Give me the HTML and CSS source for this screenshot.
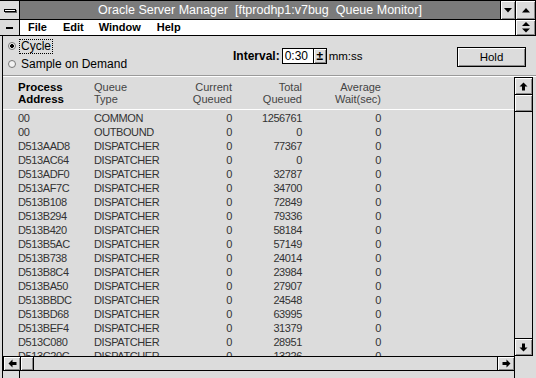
FILE: index.html
```html
<!DOCTYPE html>
<html lang="en">
<head>
    <meta charset="UTF-8">
    <title>Oracle Server Manager - Queue Monitor</title>
    <link rel="stylesheet" href="styles.css">
</head>
<body>

    <div class="window">
        <div class="titlebar">
            <div class="sysbox"><span class="sysbar"></span></div>
            <div class="title">Oracle Server Manager  [ftprodhp1:v7bug  Queue Monitor]</div>
            <div class="capbtn min">
                <svg width="8" height="5" viewBox="0 0 8 5"><polygon points="0,0 8,0 4,4.5" fill="#000"/></svg>
            </div>
            <div class="capbtn max">
                <svg width="8" height="5" viewBox="0 0 8 5"><polygon points="4,0 8,4.5 0,4.5" fill="#000"/></svg>
            </div>
        </div>

        <div class="menubar">
            <div class="sysbox"><span class="sysdash"></span></div>
            <ul class="menus">
                <li>File</li>
                <li>Edit</li>
                <li>Window</li>
                <li>Help</li>
            </ul>
            <div class="capbtn max">
                <svg width="8" height="11" viewBox="0 0 8 11"><polygon points="4,0 8,4 0,4" fill="#000"/><polygon points="0,6.5 8,6.5 4,10.5" fill="#000"/></svg>
            </div>
        </div>

        <div class="client">
            <div class="controls">
                <div class="radios">
                    <div class="radio checked"><span class="dot"></span><span class="text focus">Cycle</span></div>
                    <div class="radio"><span class="dot"></span><span class="text">Sample on Demand</span></div>
                </div>
                <div class="interval">
                    <span class="label">Interval:</span>
                    <span class="field">0:30</span>
                    <span class="spin">±</span>
                    <span class="unit">mm:ss</span>
                </div>
                <button class="hold">Hold</button>
            </div>

            <div class="list">
                <div class="table">
                    <div class="head">
                        <span class="key">Process<br>Address</span>
                        <span>Queue<br>Type</span>
                        <span class="num">Current<br>Queued</span>
                        <span class="num">Total<br>Queued</span>
                        <span class="num">Average<br>Wait(sec)</span>
                    </div>
                    <div class="rows" id="rows"></div>
                </div>
                <div class="vscroll">
                    <div class="sbtn">
                        <svg width="9" height="9" viewBox="0 0 9 9"><polygon points="4.5,0.5 8.5,4.5 6,4.5 6,8.5 3,8.5 3,4.5 0.5,4.5" fill="#000"/></svg>
                    </div>
                    <div class="thumb"></div>
                    <div class="track"></div>
                    <div class="sbtn down">
                        <svg width="9" height="9" viewBox="0 0 9 9"><polygon points="4.5,8.5 8.5,4.5 6,4.5 6,0.5 3,0.5 3,4.5 0.5,4.5" fill="#000"/></svg>
                    </div>
                </div>
            </div>

            <div class="hscroll">
                <div class="sbtn">
                    <svg width="9" height="9" viewBox="0 0 9 9"><polygon points="0.5,4.5 4.5,0.5 4.5,3 8.5,3 8.5,6 4.5,6 4.5,8.5" fill="#000"/></svg>
                </div>
                <div class="thumb"></div>
                <div class="track"></div>
                <div class="sbtn right">
                    <svg width="9" height="9" viewBox="0 0 9 9"><polygon points="8.5,4.5 4.5,0.5 4.5,3 0.5,3 0.5,6 4.5,6 4.5,8.5" fill="#000"/></svg>
                </div>
            </div>

            <div class="foot"><div class="pane"></div></div>
        </div>
    </div>

    <script>
        const queues = [
            ["00", "COMMON", 0, 1256761, 0],
            ["00", "OUTBOUND", 0, 0, 0],
            ["D513AAD8", "DISPATCHER", 0, 77367, 0],
            ["D513AC64", "DISPATCHER", 0, 0, 0],
            ["D513ADF0", "DISPATCHER", 0, 32787, 0],
            ["D513AF7C", "DISPATCHER", 0, 34700, 0],
            ["D513B108", "DISPATCHER", 0, 72849, 0],
            ["D513B294", "DISPATCHER", 0, 79336, 0],
            ["D513B420", "DISPATCHER", 0, 58184, 0],
            ["D513B5AC", "DISPATCHER", 0, 57149, 0],
            ["D513B738", "DISPATCHER", 0, 24014, 0],
            ["D513B8C4", "DISPATCHER", 0, 23984, 0],
            ["D513BA50", "DISPATCHER", 0, 27907, 0],
            ["D513BBDC", "DISPATCHER", 0, 24548, 0],
            ["D513BD68", "DISPATCHER", 0, 63995, 0],
            ["D513BEF4", "DISPATCHER", 0, 31379, 0],
            ["D513C080", "DISPATCHER", 0, 28951, 0],
            ["D513C20C", "DISPATCHER", 0, 13226, 0]
        ];

        const rowsEl = document.getElementById("rows");
        queues.forEach(q => {
            const row = document.createElement("div");
            row.classList.add("row");
            row.innerHTML = `
                <span>${q[0]}</span>
                <span>${q[1]}</span>
                <span class="num">${q[2]}</span>
                <span class="num">${q[3]}</span>
                <span class="num">${q[4]}</span>
            `;
            rowsEl.appendChild(row);
        });
    </script>

</body>
</html>
```

FILE: styles.css
```css
* {
    box-sizing: border-box;
}

body {
    margin: 0;
    width: 536px;
    height: 378px;
    overflow: hidden;
    background: #dcdcdc;
    font-family: "Liberation Sans", Arial, sans-serif;
    color: #000;
}

.window {
    display: flex;
    flex-direction: column;
    height: 378px;
}

/* caption + menu */
.titlebar {
    display: flex;
    height: 20px;
    border-top: 1px solid #000;
    border-bottom: 1px solid #000;
}

.sysbox {
    width: 20px;
    border-right: 1px solid #000;
    background: #dcdcdc;
    display: flex;
    align-items: center;
    justify-content: center;
}

.sysbar {
    width: 12px;
    height: 3px;
    background: #fff;
    border: 1px solid #000;
    box-shadow: 1px 1px 0 #666;
}

.sysdash {
    width: 7px;
    height: 2px;
    background: #000;
}

.title {
    flex: 1;
    background: #7b7b7b;
    color: #fff;
    font-size: 12.5px;
    line-height: 18px;
    text-align: center;
    white-space: pre;
    overflow: hidden;
}

.capbtn {
    display: flex;
    align-items: center;
    justify-content: center;
    background: #dcdcdc;
    border-left: 1px solid #000;
    box-shadow: inset 1px 1px #fff, inset -1px -1px #8a8a8a;
}

.capbtn.min {
    width: 15px;
}

.capbtn.max {
    width: 21px;
    border-right: 1px solid #000;
}

.menubar {
    display: flex;
    height: 16px;
    border-bottom: 1px solid #000;
}

.menus {
    flex: 1;
    display: flex;
    margin: 0;
    padding: 0;
    list-style: none;
    background: #fff;
    font-size: 11px;
    font-weight: bold;
    line-height: 15px;
}

.menus li {
    padding: 0 8px;
}

.menus li:nth-child(3) {
    padding-left: 7px;
}

/* client area */
.client {
    flex: 1;
    display: flex;
    flex-direction: column;
    margin-left: 2px;
    border-left: 1px solid #000;
}

.controls {
    display: flex;
    height: 40px;
    padding-right: 10px;
    border-bottom: 1px solid #9a9a9a;
}

.radios {
    width: 230px;
    display: flex;
    flex-direction: column;
    gap: 4px;
    padding-top: 3px;
    font-size: 12px;
}

.radio {
    display: flex;
    align-items: center;
    height: 14px;
}

.radio .dot {
    width: 8px;
    height: 8px;
    margin-left: 5px;
    margin-right: 3px;
    border-radius: 50%;
    border: 1px solid #777;
    background: #f2f2f2;
}

.radio.checked .dot {
    background: radial-gradient(circle, #000 0 1.6px, #f2f2f2 2.2px);
}

.radio .text {
    padding: 0 1px;
    line-height: 13px;
    border: 1px dotted transparent;
}

.radio .text.focus {
    border-color: #000;
}

.interval {
    display: flex;
    align-items: center;
    font-size: 12px;
}

.interval .label {
    font-weight: bold;
    margin-right: 2px;
}

.field {
    width: 32px;
    height: 16px;
    padding-left: 2px;
    line-height: 14px;
    background: #fff;
    border: 1px solid #000;
}

.spin {
    width: 13px;
    height: 16px;
    line-height: 14px;
    text-align: center;
    font-weight: bold;
    border: 1px solid #000;
    border-left: 0;
    box-shadow: inset 1px 1px #fff, inset -1px -1px #8a8a8a;
}

.unit {
    margin-left: 2px;
    font-size: 11.5px;
}

.hold {
    align-self: flex-start;
    margin: 11px 0 0 auto;
    width: 69px;
    height: 20px;
    padding: 0;
    font-family: "Liberation Sans", Arial, sans-serif;
    font-size: 11.5px;
    color: #000;
    background: #dcdcdc;
    border: 1px solid #000;
    box-shadow: inset 1px 1px #fff, inset -1px -1px #8a8a8a;
}

/* queue list */
.list {
    display: flex;
    height: 280px;
    padding-right: 3px;
    border-top: 1px solid #fff;
}

.table {
    flex: 1;
    overflow: hidden;
    font-size: 11px;
}

.head, .row {
    display: grid;
    grid-template-columns: 76px 94px 44px 70px 79px;
    padding-left: 15px;
}

.head {
    padding-top: 4px;
    padding-bottom: 4px;
    line-height: 12px;
    color: #444;
    border-bottom: 1px solid #fff;
}

.head .key {
    font-weight: bold;
    font-size: 11.5px;
    color: #000;
}

.rows {
    padding-top: 1px;
}

.row {
    line-height: 14px;
    color: #333;
    letter-spacing: -0.4px;
}

.num {
    text-align: right;
}

/* scroll bars */
.vscroll {
    width: 19px;
    display: flex;
    flex-direction: column;
    border: 1px solid #000;
}

.sbtn {
    display: flex;
    align-items: center;
    justify-content: center;
    box-shadow: inset 1px 1px #fff, inset -1px -1px #8a8a8a;
}

.vscroll .sbtn {
    height: 17px;
    border-bottom: 1px solid #000;
}

.vscroll .sbtn.down {
    border-bottom: 0;
    border-top: 1px solid #000;
}

.vscroll .thumb {
    height: 17px;
    border-bottom: 1px solid #000;
    box-shadow: inset 1px 1px #fff, inset -1px -1px #8a8a8a;
}

.track {
    flex: 1;
}

.hscroll {
    display: flex;
    width: 512px;
    height: 15px;
    border: 1px solid #000;
}

.hscroll .sbtn {
    width: 17px;
    border-right: 1px solid #000;
}

.hscroll .sbtn.right {
    border-right: 0;
    border-left: 1px solid #000;
}

.hscroll .thumb {
    width: 13px;
    border-right: 1px solid #000;
    box-shadow: inset 1px 1px #fff, inset -1px -1px #8a8a8a;
}

.foot {
    flex: 1;
    display: flex;
}

.pane {
    width: 496px;
    margin-left: 16px;
    border-left: 1px solid #000;
    border-right: 1px solid #000;
}
```
